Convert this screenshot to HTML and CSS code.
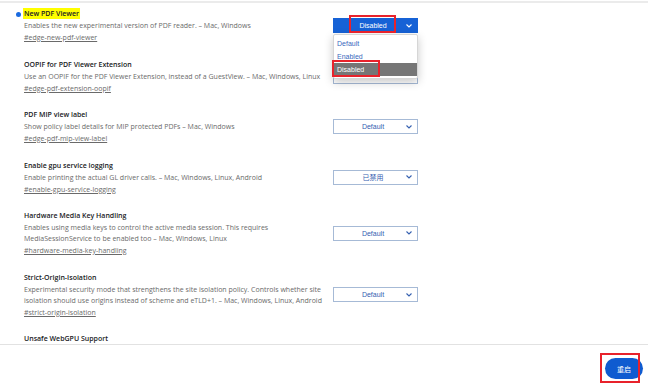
FILE: index.html
```html
<!DOCTYPE html>
<html>
	<head lang="en">
		<meta charset="UTF-8">
		<title>flags</title>
		<link rel="stylesheet" href="styles.css">
	</head>
	<body>
		<div class="frame">
			<div class="list">
				<div class="item">
					<div class="text">
						<span class="dot"></span>
						<div class="title"><span class="hl">New PDF Viewer</span></div>
						<div class="desc">Enables the new experimental version of PDF reader. – Mac, Windows</div>
						<a class="link">#edge-new-pdf-viewer</a>
					</div>
					<div class="control">
						<div class="select active">
							<span class="val">Disabled</span>
							<svg class="chev" width="6" height="4" viewBox="0 0 6 4"><polyline points="0.5,0.5 3,3 5.5,0.5" fill="none" stroke="#fff" stroke-width="1.1"/></svg>
						</div>
						<ul class="menu">
							<li>Default</li>
							<li>Enabled</li>
							<li class="on">Disabled</li>
						</ul>
						<div class="mark mark-head"></div>
						<div class="mark mark-opt"></div>
					</div>
				</div>

				<div class="item">
					<div class="text">
						<div class="title">OOPIF for PDF Viewer Extension</div>
						<div class="desc">Use an OOPIF for the PDF Viewer Extension, instead of a GuestView. – Mac, Windows, Linux</div>
						<a class="link">#edge-pdf-extension-oopif</a>
					</div>
					<div class="control">
						<div class="select">
							<span class="val">Default</span>
							<svg class="chev" width="6" height="4" viewBox="0 0 6 4"><polyline points="0.5,0.5 3,3 5.5,0.5" fill="none" stroke="#3560b0" stroke-width="1.1"/></svg>
						</div>
					</div>
				</div>

				<div class="item">
					<div class="text">
						<div class="title">PDF MIP view label</div>
						<div class="desc">Show policy label details for MIP protected PDFs – Mac, Windows</div>
						<a class="link">#edge-pdf-mip-view-label</a>
					</div>
					<div class="control">
						<div class="select">
							<span class="val">Default</span>
							<svg class="chev" width="6" height="4" viewBox="0 0 6 4"><polyline points="0.5,0.5 3,3 5.5,0.5" fill="none" stroke="#3560b0" stroke-width="1.1"/></svg>
						</div>
					</div>
				</div>

				<div class="item">
					<div class="text">
						<div class="title">Enable gpu service logging</div>
						<div class="desc">Enable printing the actual GL driver calls. – Mac, Windows, Linux, Android</div>
						<a class="link">#enable-gpu-service-logging</a>
					</div>
					<div class="control">
						<div class="select">
							<span class="val">已禁用</span>
							<svg class="chev" width="6" height="4" viewBox="0 0 6 4"><polyline points="0.5,0.5 3,3 5.5,0.5" fill="none" stroke="#3560b0" stroke-width="1.1"/></svg>
						</div>
					</div>
				</div>

				<div class="item">
					<div class="text">
						<div class="title">Hardware Media Key Handling</div>
						<div class="desc">Enables using media keys to control the active media session. This requires MediaSessionService to be enabled too – Mac, Windows, Linux</div>
						<a class="link">#hardware-media-key-handling</a>
					</div>
					<div class="control">
						<div class="select">
							<span class="val">Default</span>
							<svg class="chev" width="6" height="4" viewBox="0 0 6 4"><polyline points="0.5,0.5 3,3 5.5,0.5" fill="none" stroke="#3560b0" stroke-width="1.1"/></svg>
						</div>
					</div>
				</div>

				<div class="item">
					<div class="text">
						<div class="title">Strict-Origin-Isolation</div>
						<div class="desc">Experimental security mode that strengthens the site isolation policy. Controls whether site isolation should use origins instead of scheme and eTLD+1. – Mac, Windows, Linux, Android</div>
						<a class="link">#strict-origin-isolation</a>
					</div>
					<div class="control">
						<div class="select">
							<span class="val">Default</span>
							<svg class="chev" width="6" height="4" viewBox="0 0 6 4"><polyline points="0.5,0.5 3,3 5.5,0.5" fill="none" stroke="#3560b0" stroke-width="1.1"/></svg>
						</div>
					</div>
				</div>

				<div class="item">
					<div class="text">
						<div class="title">Unsafe WebGPU Support</div>
					</div>
				</div>
			</div>

			<div class="bar">
				<div class="restart-wrap">
					<button class="restart">重启</button>
					<div class="mark mark-btn"></div>
				</div>
			</div>
		</div>
	</body>
</html>
```

FILE: styles.css
```css
* {
	margin: 0;
	padding: 0;
	box-sizing: border-box;
}

body {
	font-family: "Open Sans", "Noto Sans CJK SC", sans-serif;
	font-size: 7px;
	color: #202124;
	background: #fff;
}

.frame {
	margin-top: 1px;
	border-top: 2px solid #ebebeb;
}

.list {
	height: 341px;
	overflow: hidden;
	padding-top: 5px;
}

.item {
	display: grid;
	grid-template-columns: 302px 85px;
	column-gap: 7px;
	align-items: center;
	padding-left: 24px;
	margin-bottom: 15.5px;
}

.text {
	position: relative;
	line-height: 11px;
}

.dot {
	position: absolute;
	left: -8px;
	top: 4px;
	width: 5px;
	height: 5px;
	border-radius: 50%;
	background: #1a6ae0;
}

.title {
	font-weight: 600;
	color: #202124;
	margin-bottom: 1px;
}

.hl {
	background: #ffff00;
	padding: 1px 1px;
	margin-left: -1px;
}

.desc {
	color: #6a6a6a;
}

.link {
	display: inline-block;
	margin-top: 1px;
	color: #6a6a6a;
	text-decoration: underline;
}

.control {
	position: relative;
}

.select {
	display: flex;
	align-items: center;
	height: 15px;
	border: 1px solid #a6bad6;
	color: #3560b0;
	background: #fff;
	font-family: "Liberation Sans", "Noto Sans CJK SC", sans-serif;
}

.select .val {
	flex: 1;
	text-align: center;
	padding-left: 6px;
}

.select .chev {
	margin-right: 5px;
}

.select.active {
	background: #1662d6;
	border-color: #1662d6;
	color: #fff;
}

.menu {
	list-style: none;
	position: absolute;
	left: 0;
	top: 16px;
	width: 85px;
	padding-top: 2px;
	padding-bottom: 2px;
	background: #fff;
	border: 1px solid #d6d6d6;
	border-radius: 2px;
	box-shadow: 0 3px 10px rgba(0, 0, 0, 0.22);
	font-family: "Liberation Sans", sans-serif;
	z-index: 2;
}

.menu li {
	height: 13px;
	line-height: 13px;
	padding-left: 3px;
	color: #3a68bd;
}

.menu li.on {
	background: #767676;
	color: #fff;
}

.mark {
	position: absolute;
	border: 2px solid #e8222b;
	z-index: 3;
}

.mark-head {
	left: 16px;
	top: -3px;
	width: 47px;
	height: 18px;
}

.mark-opt {
	left: -1px;
	top: 42px;
	width: 48px;
	height: 17px;
}

.bar {
	border-top: 1px solid #e2e2e2;
	height: 41px;
	display: flex;
	justify-content: flex-end;
	padding-top: 13px;
	padding-right: 5px;
}

.restart-wrap {
	position: relative;
}

.restart {
	display: block;
	width: 38px;
	height: 21px;
	border: none;
	border-radius: 11px;
	background: #0f5bd0;
	color: #fff;
	font-family: "Noto Sans CJK SC", sans-serif;
	font-size: 7px;
}

.mark-btn {
	left: -5px;
	top: -5px;
	width: 40px;
	height: 30px;
}
```
